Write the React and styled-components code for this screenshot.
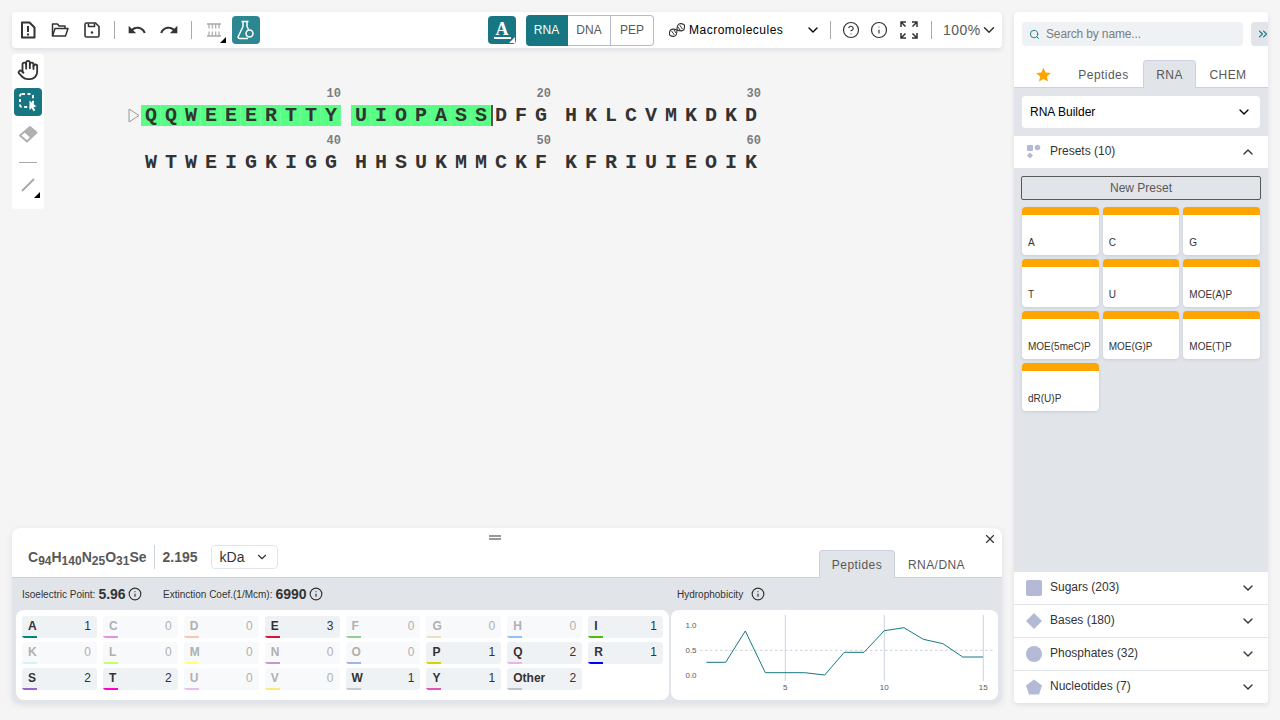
import React from "react";
import styled, { createGlobalStyle } from "styled-components";
import { MdUndo, MdRedo } from "react-icons/md";
import {
  ChevronDown,
  ChevronUp,
  ChevronsRight,
  CircleHelp,
  Hand,
  Info,
  Search,
  X,
} from "lucide-react";

const TEAL = "#167782";
const PANEL_GREY = "#e1e5ea";
const SANS = '"Liberation Sans", sans-serif';

const GlobalStyle = createGlobalStyle`
  html, body {
    margin: 0;
    height: 100%;
    background: #f5f5f5;
    font-family: ${SANS};
    color: #333;
  }
  * { box-sizing: border-box; }
`;

const Page = styled.div`
  display: flex;
  gap: 12px;
  width: 1280px;
  height: 720px;
  padding: 12px 12px 17px;
  overflow: hidden;
`;

const Main = styled.main`
  flex: 1;
  min-width: 0;
  display: flex;
  flex-direction: column;
`;

const TopBar = styled.header`
  display: flex;
  align-items: center;
  height: 36px;
  flex: none;
  background: #fff;
  border-radius: 4px;
  box-shadow: 0 2px 5px rgba(103, 104, 132, 0.15);
`;

const IconBtn = styled.button`
  position: relative;
  display: flex;
  align-items: center;
  justify-content: center;
  flex: none;
  width: ${({ $w }) => $w || 32}px;
  height: 28px;
  margin-left: ${({ $ml }) => $ml || 0}px;
  margin-right: ${({ $push }) => ($push ? "auto" : "0")};
  padding: 0;
  border: 0;
  border-radius: 4px;
  background: ${({ $bg }) => $bg || "transparent"};
  color: ${({ $color }) => $color || "#333"};
`;

const Corner = styled.span`
  position: absolute;
  right: ${({ $r }) => $r ?? 2}px;
  bottom: ${({ $b }) => $b ?? 2}px;
  width: 0;
  height: 0;
  border-left: 6px solid transparent;
  border-bottom: 6px solid ${({ $color }) => $color || "#000"};
`;

const VSep = styled.span`
  flex: none;
  width: 1px;
  height: 18px;
  margin: 0 ${({ $m }) => $m ?? 6}px;
  background: #a9a9a9;
`;

const LetterA = styled.span`
  font-family: "Liberation Serif", serif;
  font-weight: 700;
  font-size: 18px;
  line-height: 15px;
  color: #fff;
  border-bottom: 2px solid #fff;
  padding: 0 2px;
`;

const Segmented = styled.div`
  display: flex;
  flex: none;
  width: 128px;
  height: 31px;
  margin-left: 10px;
`;

const Segment = styled.div`
  display: flex;
  align-items: center;
  justify-content: center;
  width: ${({ $w }) => $w}px;
  font: 12px ${SANS};
  background: ${({ $on }) => ($on ? TEAL : "#fff")};
  color: ${({ $on }) => ($on ? "#fff" : "#585858")};
  border: 1px solid ${({ $on }) => ($on ? TEAL : "#b4b9d6")};
  border-left: 0;
  &:first-child { border-radius: 4px 0 0 4px; }
  &:last-child { border-radius: 0 4px 4px 0; }
`;

const MacroSelect = styled.div`
  display: flex;
  align-items: center;
  flex: none;
  width: 170px;
  padding: 0 3px 0 15px;
  font: 12px ${SANS};
  color: #000;
  span { margin-left: 4px; flex: 1; letter-spacing: 0.5px; }
`;

const ZoomBox = styled.div`
  display: flex;
  align-items: center;
  flex: none;
  width: 62px;
  padding-left: 3px;
  font: 14px ${SANS};
  letter-spacing: 0.5px;
  color: #585858;
  svg { margin-left: -1px; color: #333; }
`;

const Middle = styled.div`
  flex: 1;
  min-height: 0;
  display: flex;
  align-items: flex-start;
  margin-top: 6px;
`;

const ToolRail = styled.nav`
  display: flex;
  flex-direction: column;
  align-items: center;
  gap: 4px;
  flex: none;
  width: 32px;
  padding: 2px 2px 10px;
  background: #fff;
  border-radius: 4px;
`;

const HSep = styled.span`
  width: 18px;
  height: 1px;
  margin: 10px 0 4px;
  background: #a9a9a9;
`;

const Sequence = styled.div`
  display: flex;
  flex-direction: column;
  gap: 9px;
  padding: 34px 0 0 97px;
`;

const SeqRow = styled.div`
  position: relative;
  display: flex;
  gap: 10px;
`;

const SenseMark = styled.svg`
  position: absolute;
  left: -13px;
  bottom: 3px;
`;

const SeqGroup = styled.div`
  display: flex;
  flex-direction: column;
  width: 200px;
`;

const SeqNumber = styled.div`
  height: 12px;
  margin-bottom: 5px;
  text-align: right;
  font: 700 12px/12px "Liberation Mono", monospace;
  color: #7c7c7f;
`;

const SeqCells = styled.div`
  display: flex;
`;

const Cell = styled.span`
  position: relative;
  display: flex;
  align-items: center;
  justify-content: center;
  width: 20px;
  height: 21px;
  font: 700 20px/21px "Liberation Mono", monospace;
  color: #333;
  background: ${({ $hl }) => ($hl ? "#57ff85" : "transparent")};
  box-shadow: ${({ $hl }) => ($hl ? "inset -1px 0 0 rgba(255,255,255,0.12)" : "none")};
`;

const Caret = styled.i`
  position: absolute;
  right: -2px;
  top: 0;
  width: 2px;
  height: 21px;
  background: #555;
`;

const Bottom = styled.section`
  flex: none;
  height: 175px;
  display: flex;
  flex-direction: column;
  border-radius: 8px;
  overflow: hidden;
  background: ${PANEL_GREY};
  box-shadow: 0 2px 6px rgba(103, 104, 132, 0.15);
`;

const BottomHead = styled.div`
  position: relative;
  flex: none;
  display: flex;
  align-items: flex-end;
  height: 50px;
  padding: 0 24px 0 16px;
  background: #fff;
  border-bottom: 1px solid #ccd1e0;
`;

const Handle = styled.span`
  position: absolute;
  top: 7px;
  left: 477px;
  width: 12px;
  height: 1px;
  border-top: 2px solid #999;
  border-bottom: 2px solid #999;
  box-sizing: content-box;
`;

const CloseBtn = styled.span`
  position: absolute;
  top: 4px;
  right: 5px;
  display: flex;
  color: #333;
`;

const Formula = styled.div`
  align-self: center;
  margin-top: 8px;
  font: 700 14px ${SANS};
  color: #585858;
  white-space: nowrap;
  sub { font-size: 12px; line-height: 0; vertical-align: -3px; }
`;

const Mass = styled.div`
  align-self: center;
  display: flex;
  align-items: center;
  height: 24px;
  margin: 8px 0 0 7px;
  padding-left: 8px;
  border-left: 1px solid #ccd1e0;
  font: 700 14px ${SANS};
  color: #585858;
`;

const UnitSelect = styled.div`
  align-self: center;
  display: flex;
  align-items: center;
  justify-content: space-between;
  width: 67px;
  height: 24px;
  margin: 8px auto 0 13px;
  padding: 0 8px;
  border: 1px solid ${PANEL_GREY};
  border-radius: 4px;
  font: 14px ${SANS};
  color: #333;
`;

const Tab = styled.div`
  display: flex;
  align-items: center;
  justify-content: center;
  flex: none;
  width: ${({ $w }) => $w}px;
  height: ${({ $h }) => $h || 28}px;
  margin-bottom: -1px;
  font: 12px ${SANS};
  letter-spacing: 0.45px;
  color: #585858;
  border-radius: 4px 4px 0 0;
  background: ${({ $on }) => ($on ? PANEL_GREY : "transparent")};
  border: 1px solid ${({ $on }) => ($on ? "#ccd1e0" : "transparent")};
  border-bottom: 0;
`;

const InfoRow = styled.div`
  flex: none;
  display: flex;
  align-items: center;
  height: 32px;
  padding-left: 10px;
`;

const Metric = styled.div`
  display: flex;
  align-items: center;
  flex: none;
  width: ${({ $w }) => $w}px;
  font: 10px ${SANS};
  color: #333;
  b { margin-left: 3px; font: 700 14px ${SANS}; }
  svg { margin-left: ${({ $gap }) => $gap ?? 2}px; }
`;

const Cards = styled.div`
  flex: 1;
  display: flex;
  gap: 2px;
  padding: 0 4px 3px;
  min-height: 0;
`;

const Card = styled.div`
  background: #fff;
  border-radius: 8px;
  width: ${({ $w }) => $w}px;
  flex: none;
`;

const AcidGrid = styled(Card)`
  display: grid;
  grid-template-columns: repeat(8, 1fr);
  grid-auto-rows: 22px;
  gap: 4px 6px;
  padding: 6px;
`;

const Acid = styled.div`
  position: relative;
  display: flex;
  align-items: center;
  justify-content: space-between;
  padding: 0 6px 2px;
  border-radius: 3px;
  overflow: hidden;
  background: ${({ $n }) => ($n ? "#eff2f5" : "#f8f9fa")};
  color: ${({ $n }) => ($n ? "#333" : "#b0b0b0")};
  font: 12px ${SANS};
  b { font-weight: 700; }
  &::after {
    content: "";
    position: absolute;
    left: 0;
    bottom: 0;
    width: 15px;
    height: 2px;
    background: ${({ $c }) => $c};
  }
`;

const Sidebar = styled.aside`
  flex: none;
  width: 254px;
  display: flex;
  flex-direction: column;
  background: #fff;
  border-radius: 4px;
  overflow: hidden;
  box-shadow: 0 2px 5px rgba(103, 104, 132, 0.15);
`;

const SearchRow = styled.div`
  flex: none;
  display: flex;
  gap: 8px;
  padding: 10px 0 0 8px;
`;

const SearchBox = styled.div`
  display: flex;
  align-items: center;
  gap: 6px;
  width: 221px;
  height: 24px;
  padding: 0 7px;
  background: #eff2f5;
  border-radius: 4px;
  font: 12px ${SANS};
  letter-spacing: -0.15px;
  color: #7c7c7f;
  svg { color: ${TEAL}; }
`;

const ExpandBtn = styled.div`
  display: flex;
  align-items: center;
  justify-content: center;
  width: 24px;
  height: 24px;
  margin-right: -7px;
  flex: none;
  background: ${PANEL_GREY};
  border-radius: 4px;
  color: ${TEAL};
`;

const SideTabs = styled.div`
  flex: none;
  display: flex;
  align-items: flex-end;
  height: 42px;
  padding-left: 8px;
  border-bottom: 1px solid #ccd1e0;
`;

const SideBody = styled.div`
  flex: 1;
  min-height: 0;
  background: ${PANEL_GREY};
  display: flex;
  flex-direction: column;
`;

const BuilderSelect = styled.div`
  display: flex;
  align-items: center;
  justify-content: space-between;
  height: 32px;
  margin: 8px 8px;
  padding: 0 8px;
  background: #fff;
  border-radius: 4px;
  font: 12px ${SANS};
  color: #000;
`;

const AccordionHead = styled.div`
  flex: none;
  display: flex;
  align-items: center;
  height: 32px;
  padding: 0 12px;
  background: #fff;
  font: 12px ${SANS};
  color: #333;
  & + & { height: 33px; border-top: 1px solid ${PANEL_GREY}; }
  span { flex: 1; margin-left: 8px; margin-top: -2px; }
  > svg:last-child { color: #333; }
`;

const NewPreset = styled.div`
  display: flex;
  align-items: center;
  justify-content: center;
  flex: none;
  height: 24px;
  margin: 8px 7px 7px;
  border: 1px solid #585858;
  border-radius: 2px;
  font: 12px ${SANS};
  color: #585858;
`;

const PresetGrid = styled.div`
  display: grid;
  grid-template-columns: repeat(3, 1fr);
  grid-auto-rows: 48px;
  gap: 4px;
  padding: 0 8px;
`;

const Preset = styled.div`
  display: flex;
  align-items: flex-end;
  padding: 0 6px 7px;
  background: #fff;
  border-top: 8px solid #ffa500;
  border-radius: 4px;
  box-shadow: 0 1px 3px rgba(103, 104, 132, 0.2);
  font: 10px ${SANS};
  color: #333;
`;

const ACIDS = [
  ["A", 1, "#00897b"], ["C", 0, "#e68fef"], ["D", 0, "#ffc4b0"], ["E", 3, "#dc143c"],
  ["F", 0, "#8fd08f"], ["G", 0, "#e8e2b8"], ["H", 0, "#8fc1ff"], ["I", 1, "#4bbd10"],
  ["K", 0, "#d6f2f2"], ["L", 0, "#bfff70"], ["M", 0, "#ffff80"], ["N", 0, "#c896c8"],
  ["O", 0, "#a0b4e8"], ["P", 1, "#d4d400"], ["Q", 2, "#edb0ed"], ["R", 1, "#0000ff"],
  ["S", 2, "#9966cc"], ["T", 2, "#ff00cc"], ["U", 0, "#e8c0f0"], ["V", 0, "#ffe680"],
  ["W", 1, "#c8c8d0"], ["Y", 1, "#dd55bb"], ["Other", 2, "#c0c0c8"],
];

const PRESETS = ["A", "C", "G", "T", "U", "MOE(A)P", "MOE(5meC)P", "MOE(G)P", "MOE(T)P", "dR(U)P"];

const ROWS = [
  { groups: ["QQWEEERTTY", "UIOPASSDFG", "HKLCVMKDKD"], start: 0 },
  { groups: ["WTWEIGKIGG", "HHSUKMMCKF", "KFRIUIEOIK"], start: 30 },
];

const HIGHLIGHTED = 17;

const POINTS = [
  [35.3, 52.3], [54.7, 52.3], [74.3, 21], [94.3, 62.7], [114, 62.7],
  [133.7, 62.7], [153.7, 65], [173.3, 42.3], [193, 42.3], [213.3, 20.7],
  [233, 17.7], [252.3, 29.3], [272, 33.7], [291.7, 47], [312, 47],
];

const FileIcon = () => (
  <svg width="16" height="18" viewBox="0 0 16 18" fill="none" stroke="#333" strokeWidth="2">
    <path d="M2 1.500h7.500L14.500 6.500v10H2z" strokeLinejoin="round" />
    <path d="M8 5v6M8 12.500v2" />
  </svg>
);

const FolderIcon = () => (
  <svg width="18" height="16" viewBox="0 0 18 16" fill="none" stroke="#333" strokeWidth="1.500" strokeLinejoin="round">
    <path d="M1.500 14V2h5l1.500 2h6v2.500" />
    <path d="M1.500 14l2.500-7.500h13L14.500 14z" />
  </svg>
);

const SaveIcon = () => (
  <svg width="16" height="16" viewBox="0 0 16 16" fill="none" stroke="#333" strokeWidth="1.600" strokeLinejoin="round">
    <path d="M1 2.500A1.500 1.500 0 0 1 2.500 1h9L15 4.500v9a1.500 1.500 0 0 1-1.500 1.500h-11A1.500 1.500 0 0 1 1 13.500z" />
    <path d="M4.500 1.500v3h6v-3" />
    <circle cx="8" cy="10.500" r="1.200" fill="#333" stroke="none" />
  </svg>
);

const RnaIcon = () => (
  <svg width="16" height="16" viewBox="0 0 16 16" fill="none" stroke="#a9a9a9" strokeWidth="1.500">
    <path d="M1 2h14M1 14h14" />
    <path d="M3 2v4.500M6.300 2v4.500M9.700 2v4.500M13 2v4.500M3 9.500V14M6.300 9.500V14M9.700 9.500V14M13 9.500V14" strokeWidth="1.200" />
  </svg>
);

const FlaskIcon = () => (
  <svg width="18" height="20" viewBox="0 0 18 20" fill="none" stroke="#fff" strokeWidth="1.500" strokeLinejoin="round">
    <path d="M4.500 1.500h7M6 1.500v5L1.500 16a1.500 1.500 0 0 0 1.300 2.500H11" />
    <path d="M10 1.500v5l1.500 3" />
    <circle cx="12.500" cy="13.500" r="3.500" />
  </svg>
);

const DnaIcon = () => (
  <svg width="16" height="16" viewBox="0 0 16 16" fill="none" stroke="#333" strokeWidth="1.100">
    <g transform="rotate(-35 8 8)">
      <path d="M-1 8C1.500 3 4.500 3 8 8s6.500 5 9 0" />
      <path d="M-1 8C1.500 13 4.500 13 8 8s6.500-5 9 0" />
      <path d="M3 5.500v5M5.500 6v4M10.500 6v4M13 5.500v5" strokeWidth="0.900" />
    </g>
  </svg>
);

const FullscreenIcon = () => (
  <svg width="18" height="18" viewBox="0 0 18 18" fill="none" stroke="#333" strokeWidth="1.500">
    <path d="M1 6V1h5M1 1l4.500 4.500M12 1h5v5M17 1l-4.500 4.500M1 12v5h5M1 17l4.500-4.500M12 17h5v-5M17 17l-4.500-4.500" />
  </svg>
);

const SelectIcon = () => (
  <svg width="20" height="20" viewBox="0 0 20 20" fill="none">
    <rect x="2" y="2" width="13" height="13" rx="2" stroke="#fff" strokeWidth="2" strokeDasharray="3 2.500" />
    <path d="M11.500 8.500l7 6-3 .5 1.700 3.300-1.800.9-1.600-3.300-2.300 2.100z" fill="#fff" />
  </svg>
);

const EraserIcon = () => (
  <svg width="20" height="18" viewBox="0 0 20 18">
    <path d="M12 2L18.500 7.500 9 16.500 2 10.500z" fill="#fff" stroke="#b0b0b0" strokeWidth="2" strokeLinejoin="round" />
    <path d="M12 2L18.500 7.500 12.500 13 6 7z" fill="#b0b0b0" />
  </svg>
);

const LineIcon = () => (
  <svg width="14" height="14" viewBox="0 0 14 14">
    <path d="M1 13L13 1" stroke="#a9a9a9" strokeWidth="2" />
  </svg>
);

const StarIcon = () => (
  <svg width="15" height="15" viewBox="0 0 24 24" fill="#ffa500">
    <path d="M12 1l3.400 7.600 8.300.9-6.200 5.600 1.700 8.200L12 19.100l-7.200 4.200 1.700-8.200L.3 9.500l8.300-.9z" />
  </svg>
);

const PresetsIcon = () => (
  <svg width="16" height="16" viewBox="0 0 16 16" fill="#b4b9d6">
    <rect x="1" y="1" width="6" height="6" rx="1" />
    <circle cx="11.500" cy="3.500" r="2.800" />
    <path d="M4 8.500L7 11.500 4 14.500 1 11.500z" />
  </svg>
);

const SugarIcon = () => (
  <svg width="16" height="16" viewBox="0 0 16 16" fill="#b4b9d6">
    <rect width="16" height="16" rx="2" />
  </svg>
);

const BaseIcon = () => (
  <svg width="16" height="16" viewBox="0 0 16 16" fill="#b4b9d6">
    <path d="M8 0l8 8-8 8-8-8z" />
  </svg>
);

const PhosphateIcon = () => (
  <svg width="16" height="16" viewBox="0 0 16 16" fill="#b4b9d6">
    <circle cx="8" cy="8" r="8" />
  </svg>
);

const NucleotideIcon = () => (
  <svg width="16" height="16" viewBox="0 0 16 16" fill="#b4b9d6">
    <path d="M8 .500L16 6.500l-3 9H3l-3-9z" />
  </svg>
);

const HydrophobicityChart = () => (
  <svg width="327" height="90" viewBox="0 0 327 90">
    <path d="M29 40.300H322" stroke="#ccd1e0" strokeDasharray="2.500 2.500" />
    {[114.3, 213.3, 312.3].map((x) => (
      <path key={x} d={`M${x} 5V71`} stroke="#ccd1e0" />
    ))}
    <polyline points={POINTS.map((p) => p.join(",")).join(" ")} fill="none" stroke={TEAL} strokeWidth="1" />
    <g fontFamily="Liberation Sans, sans-serif" fontSize="8" fill="#585858" textAnchor="middle">
      <text x="20" y="17.500">1.0</text>
      <text x="20" y="42.500">0.5</text>
      <text x="20" y="67.500">0.0</text>
      <text x="114.300" y="80">5</text>
      <text x="213.300" y="80">10</text>
      <text x="312.300" y="80">15</text>
    </g>
  </svg>
);

const Accordion = ({ icon, title, open }) => (
  <AccordionHead>
    {icon}
    <span>{title}</span>
    {open ? <ChevronUp size={16} /> : <ChevronDown size={16} />}
  </AccordionHead>
);

const App = () => (
  <Page>
    <GlobalStyle />
    <Main>
      <TopBar>
        <IconBtn><FileIcon /></IconBtn>
        <IconBtn><FolderIcon /></IconBtn>
        <IconBtn><SaveIcon /></IconBtn>
        <VSep />
        <IconBtn><MdUndo size={20} /></IconBtn>
        <IconBtn><MdRedo size={20} /></IconBtn>
        <VSep />
        <IconBtn><RnaIcon /><Corner $r={4} $b={1} /></IconBtn>
        <IconBtn $w={28} $ml={2} $push $bg="#2b8790"><FlaskIcon /></IconBtn>
        <IconBtn $w={28} $bg={TEAL}><LetterA>A</LetterA><Corner $color="#fff" $r={1} $b={1} /></IconBtn>
        <Segmented>
          <Segment $on $w={42}>RNA</Segment>
          <Segment $w={43}>DNA</Segment>
          <Segment $w={43}>PEP</Segment>
        </Segmented>
        <MacroSelect>
          <DnaIcon />
          <span>Macromolecules</span>
          <ChevronDown size={16} />
        </MacroSelect>
        <VSep />
        <IconBtn $w={28}><CircleHelp size={18} strokeWidth={1.6} /></IconBtn>
        <IconBtn $w={28}><Info size={18} strokeWidth={1.6} /></IconBtn>
        <IconBtn $w={28} $ml={2}><FullscreenIcon /></IconBtn>
        <VSep $m={8} />
        <ZoomBox>100%<ChevronDown size={18} /></ZoomBox>
      </TopBar>
      <Middle>
        <ToolRail>
          <IconBtn $w={28}><Hand size={22} strokeWidth={2} /></IconBtn>
          <IconBtn $w={28} $bg={TEAL}><SelectIcon /></IconBtn>
          <IconBtn $w={28}><EraserIcon /></IconBtn>
          <HSep />
          <IconBtn $w={28}><LineIcon /><Corner $r={2} $b={1} /></IconBtn>
        </ToolRail>
        <Sequence>
          {ROWS.map((row, r) => (
            <SeqRow key={row.start}>
              {r === 0 && (
                <SenseMark width="12" height="15" viewBox="0 0 12 15" fill="none">
                  <path d="M1 1l10 6.500L1 14z" stroke="#999" />
                </SenseMark>
              )}
              {row.groups.map((letters, g) => (
                <SeqGroup key={g}>
                  <SeqNumber>{row.start + (g + 1) * 10}</SeqNumber>
                  <SeqCells>
                    {[...letters].map((letter, i) => {
                      const index = row.start + g * 10 + i;
                      return (
                        <Cell key={i} $hl={index < HIGHLIGHTED}>
                          {letter}
                          {index === HIGHLIGHTED - 1 && <Caret />}
                        </Cell>
                      );
                    })}
                  </SeqCells>
                </SeqGroup>
              ))}
            </SeqRow>
          ))}
        </Sequence>
      </Middle>
      <Bottom>
        <BottomHead>
          <Handle />
          <CloseBtn><X size={14} /></CloseBtn>
          <Formula>
            C<sub>94</sub>H<sub>140</sub>N<sub>25</sub>O<sub>31</sub>Se
          </Formula>
          <Mass>2.195</Mass>
          <UnitSelect>kDa<ChevronDown size={14} /></UnitSelect>
          <Tab $on $w={76}>Peptides</Tab>
          <Tab $w={83}>RNA/DNA</Tab>
        </BottomHead>
        <InfoRow>
          <Metric $w={141}>Isoelectric Point:<b>5.96</b><Info size={14} /></Metric>
          <Metric $w={514}>Extinction Coef.(1/Mcm):<b>6990</b><Info size={14} /></Metric>
          <Metric $w={100} $gap={8}>Hydrophobicity<Info size={14} /></Metric>
        </InfoRow>
        <Cards>
          <AcidGrid $w={653}>
            {ACIDS.map(([name, n, c]) => (
              <Acid key={name} $n={n} $c={c}>
                <b>{name}</b>
                {n}
              </Acid>
            ))}
          </AcidGrid>
          <Card $w={327}><HydrophobicityChart /></Card>
        </Cards>
      </Bottom>
    </Main>
    <Sidebar>
      <SearchRow>
        <SearchBox><Search size={11} />Search by name...</SearchBox>
        <ExpandBtn><ChevronsRight size={14} /></ExpandBtn>
      </SearchRow>
      <SideTabs>
        <Tab $w={42}><StarIcon /></Tab>
        <Tab $w={79}>Peptides</Tab>
        <Tab $on $w={53}>RNA</Tab>
        <Tab $w={64}>CHEM</Tab>
      </SideTabs>
      <SideBody>
        <BuilderSelect>RNA Builder<ChevronDown size={16} /></BuilderSelect>
        <Accordion icon={<PresetsIcon />} title="Presets (10)" open />
        <NewPreset>New Preset</NewPreset>
        <PresetGrid>
          {PRESETS.map((p) => <Preset key={p}>{p}</Preset>)}
        </PresetGrid>
      </SideBody>
      <Accordion icon={<SugarIcon />} title="Sugars (203)" />
      <Accordion icon={<BaseIcon />} title="Bases (180)" />
      <Accordion icon={<PhosphateIcon />} title="Phosphates (32)" />
      <Accordion icon={<NucleotideIcon />} title="Nucleotides (7)" />
    </Sidebar>
  </Page>
);

export default App;
